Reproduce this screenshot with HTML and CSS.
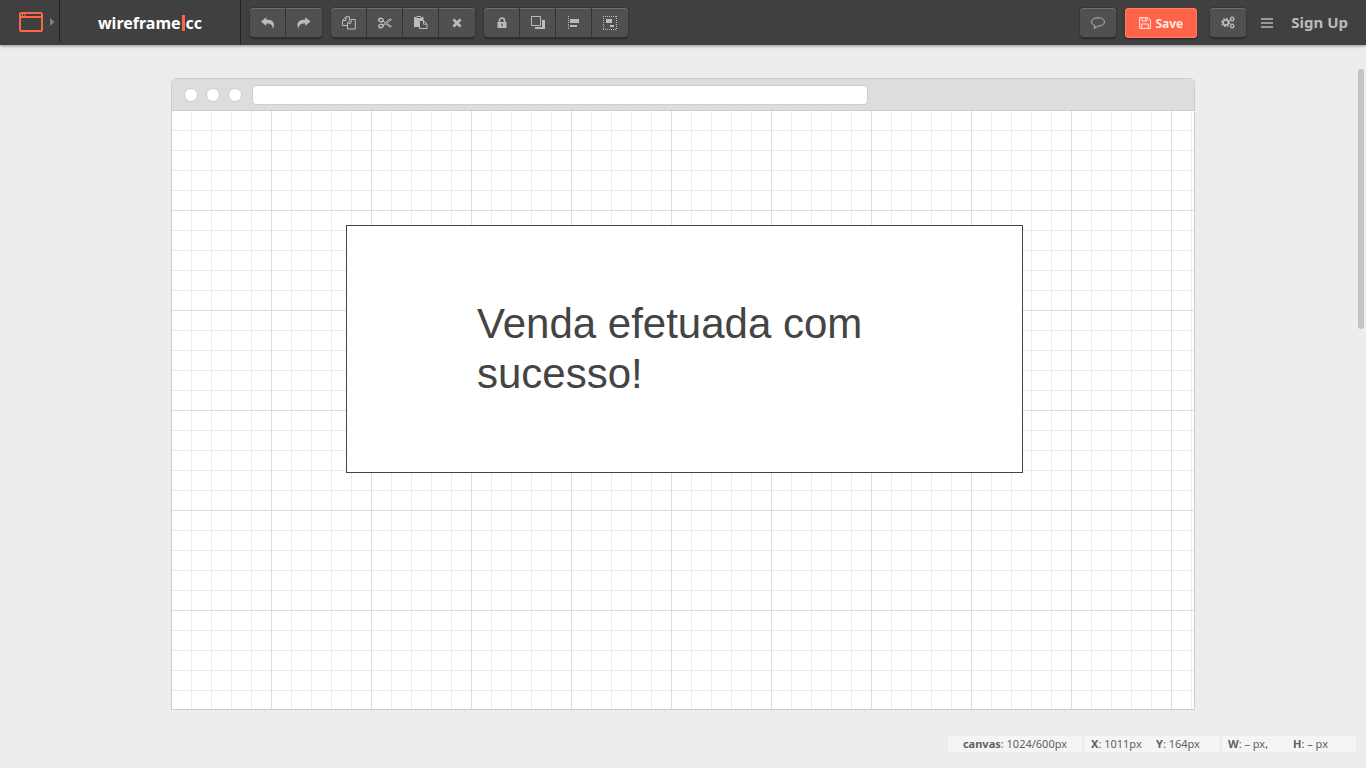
FILE: index.html
```html
<!DOCTYPE html>
<html lang="en">
<head>
<meta charset="utf-8">
<title>wireframe|cc</title>
<meta name="viewport" content="width=device-width, initial-scale=1">
<link rel="stylesheet" href="styles.css">
</head>
<body>
<header class="topbar">
  <button class="device" type="button" aria-label="Choose device">
    <svg width="24" height="20" viewBox="0 0 24 20" fill="none" stroke="#ff6448" stroke-width="2"><rect x="1" y="1" width="22" height="18" rx="1.5"/><path d="M1 5H23" stroke-width="2"/><path d="M3.500 2v2M6 2v2" stroke-width="1"/></svg>
    <svg width="5" height="8" viewBox="0 0 5 8" fill="#808080"><path d="M0 0L4.500 4L0 8Z"/></svg>
  </button>
  <a class="logo" href="#">wireframe<span class="logo-bar"></span>cc</a>
  <nav class="tools" aria-label="Editing">
    <div class="group">
      <button class="tool" type="button" aria-label="Undo"><svg width="14" height="12" viewBox="0 0 14 12"><path d="M0 4.600L5.300 .3V2.700C10.500 2.600 13.300 4.600 13 8.200Q12.900 10 11.700 11.800C11.700 8 9.800 6.300 5.300 6.500V9Z"/></svg></button>
      <button class="tool" type="button" aria-label="Redo"><svg width="14" height="12" viewBox="0 0 14 12"><path d="M13.500 4.600L8.200 .3V2.700C3 2.600 .2 4.600 .5 8.200Q.6 10 1.800 11.800C1.800 8 3.700 6.300 8.200 6.500V9Z"/></svg></button>
    </div>
    <div class="group">
      <button class="tool" type="button" aria-label="Copy"><svg class="line" width="14" height="14" viewBox="0 0 14 14"><path d="M5.500 9.500H.5V4.500L4 .7H7.500V4M.7 4.500H4V.7M5.500 7L9 3.500H13.300V13H5.500ZM5.700 7.200H9V3.700"/></svg></button>
      <button class="tool" type="button" aria-label="Cut"><svg class="line" width="14" height="12" viewBox="0 0 14 12"><ellipse cx="3" cy="3" rx="2.200" ry="1.700" transform="rotate(20 3 3)" stroke-width="1.500"/><ellipse cx="3" cy="9" rx="2.200" ry="1.700" transform="rotate(-20 3 9)" stroke-width="1.500"/><path d="M4.800 4.100L7.500 5.500L12 2L13.400 2.600L8.500 6.200L13.400 9.500L12 10L7.500 6.900L4.800 8M7.500 5.500L6.500 6.200L7.500 6.900"/></svg></button>
      <button class="tool" type="button" aria-label="Paste"><svg width="14" height="14" viewBox="0 0 14 14"><path d="M0 1H2.500V0H7V1H9.500V4H5V11H0Z"/><path d="M2.500 1.500H7" stroke="#505050" stroke-width="1"/><path class="line" d="M5.500 4.500H9.500L13 8V12.500H5.500ZM9.500 4.500V8.200H13"/></svg></button>
      <button class="tool" type="button" aria-label="Delete"><svg width="10" height="10" viewBox="0 0 10 10"><path d="M.5 2.300L2.300 .5L5 3.100L7.700 .5L9.500 2.300L6.900 5L9.500 7.700L7.700 9.500L5 6.900L2.300 9.500L.5 7.700L3.100 5Z"/></svg></button>
    </div>
    <div class="group">
      <button class="tool" type="button" aria-label="Lock"><svg width="10" height="12" viewBox="0 0 10 12"><path d="M2.500 6V3.500A2.500 2.500 0 0 1 7.500 3.500V6" fill="none" stroke="#bbb" stroke-width="1.500"/><rect x=".5" y="5" width="9" height="6" rx=".6"/><path d="M5 6.500v3" stroke="#505050" stroke-width="1.200"/></svg></button>
      <button class="tool" type="button" aria-label="Arrange"><svg width="14" height="14" viewBox="0 0 14 14"><path class="line" d="M.5 .5H9.500V9.500H.5Z"/><path d="M11 4H14V13H4V11H11Z"/></svg></button>
      <button class="tool" type="button" aria-label="Align"><svg width="12" height="14" viewBox="0 0 12 14"><path d="M.5 0V14" stroke="#bbb" stroke-dasharray="1 1"/><path d="M2 3H11V7H2ZM2 9H9V11H2Z"/></svg></button>
      <button class="tool" type="button" aria-label="Group"><svg width="14" height="14" viewBox="0 0 14 14"><path d="M0 .5H14M0 13.500H14M.5 0V14M13.500 0V14" stroke="#bbb" stroke-dasharray="1 1"/><path d="M3 3H9V7H3ZM7 9H11V11H7Z"/></svg></button>
    </div>
  </nav>
  <div class="actions">
    <div class="group"><button class="tool" type="button" aria-label="Comment"><svg class="line" width="14" height="12" viewBox="0 0 14 12"><path d="M4 8.600C1.800 8 .6 6.700 .6 5C.6 2.600 3.300 .8 7 .8S13.400 2.600 13.400 5S10.600 9.100 6.800 9.100Q5.200 10.800 3 11.200Q4 10 4 8.600Z"/></svg></button></div>
    <button class="save" type="button"><svg width="12" height="12" viewBox="0 0 12 12" fill="none" stroke="#ffe8e3" stroke-width="1"><path d="M.6 .6H9L11.400 3V11.400H.6ZM3 .6V4H8V.6M2.700 11.400V7H9.300V11.400M6.500 1.200V3.300"/></svg>Save</button>
    <div class="group"><button class="tool" type="button" aria-label="Settings"><svg class="line" width="14" height="13" viewBox="0 0 14 13"><circle cx="4.700" cy="6.500" r="2.700" stroke-width="1.800"/><circle cx="4.700" cy="6.500" r="4.100" stroke-width="1.200" stroke-dasharray="1.600 1.620"/><circle cx="11.200" cy="3" r="1.600" stroke-width="1.200"/><circle cx="11.200" cy="10" r="1.600" stroke-width="1.200"/><circle cx="11.200" cy="3" r="2.400" stroke-width=".7" stroke-dasharray="1 .9"/><circle cx="11.200" cy="10" r="2.400" stroke-width=".7" stroke-dasharray="1 .9"/></svg></button></div>
    <button class="menu" type="button" aria-label="Menu"><svg width="12" height="10" viewBox="0 0 12 10"><path d="M0 0H12V2H0ZM0 4H12V6H0ZM0 8H12V10H0Z"/></svg></button>
    <a class="signup" href="#">Sign Up</a>
  </div>
</header>
<main class="workspace">
  <section class="browser" aria-label="Wireframe">
    <div class="chrome">
      <span class="dot"></span><span class="dot"></span><span class="dot"></span>
      <input class="address" type="text" aria-label="Address">
    </div>
    <div class="canvas">
      <div class="shape"><p class="message">Venda efetuada com sucesso!</p></div>
    </div>
  </section>
</main>
<footer class="status">
  <div class="chip center"><span><b>canvas</b>: 1024/600px</span></div>
  <div class="chip"><span class="coord"><b>X</b>: 1011px</span><span><b>Y</b>: 164px</span></div>
  <div class="chip"><span class="coord"><b>W</b>: – px,</span><span><b>H</b>: – px</span></div>
</footer>
<div class="scroll-thumb"></div>
</body>
</html>
```
FILE: styles.css
```css
* { box-sizing: border-box; }
body {
  margin: 0;
  min-height: 100vh;
  display: flex;
  flex-direction: column;
  background: #ededed;
  color: #444;
  font-family: "Noto Sans", "Open Sans", sans-serif;
}
button { font: inherit; border: 0; padding: 0; background: none; cursor: pointer; }
a { text-decoration: none; }
svg { display: block; }

.topbar {
  display: flex;
  height: 45px;
  background: #404040;
  box-shadow: 0 1px 3px rgba(0, 0, 0, .4);
}
.device {
  display: flex;
  align-items: center;
  gap: 7px;
  width: 60px;
  height: 42px;
  padding: 1px 0 0 19px;
  border-right: 1px solid #222;
}
.logo {
  display: flex;
  align-items: center;
  justify-content: center;
  width: 181px;
  border-right: 1px solid #222;
  color: #fff;
  font-size: 16px;
  font-weight: 700;
}
.logo-bar { width: 3px; height: 16px; margin: 0 1px; background: #ff6448; }
.tools { display: flex; align-items: flex-start; gap: 9px; padding: 8px 9px; }
.group {
  display: flex;
  height: 29px;
  border-radius: 4px;
  background: #505050;
  box-shadow: inset 0 1px #707070, 0 0 0 1px #353535, 0 2px 1px #262626;
}
.tool {
  display: flex;
  align-items: center;
  justify-content: center;
  width: 36px;
  fill: #bbb;
}
.tool:not(:last-child) { border-right: 1px solid #333; }
.line { fill: none; stroke: #bbb; stroke-width: 1; }
.actions { display: flex; align-items: flex-start; margin-left: auto; padding: 8px 18px 8px 0; }
.save {
  display: flex;
  align-items: center;
  justify-content: center;
  gap: 4px;
  width: 72px;
  height: 30px;
  margin: 0 13px 0 9px;
  border-radius: 4px;
  background: #ff6448;
  box-shadow: inset 0 0 0 1px #ff7d66, 0 1px 2px #222;
  color: #ffe8e3;
  font-size: 12px;
  font-weight: 700;
}
.menu { width: 12px; height: 29px; margin: 0 18px 0 15px; fill: #999; }
.signup { color: #bbb; font-size: 15px; font-weight: 700; line-height: 28px; }

.workspace { flex: 1; padding: 33px 16px 24px; }
.browser {
  max-width: 1024px;
  margin: 0 auto;
  border: 1px solid #ccc;
  border-radius: 5px 5px 0 0;
  background: #fff;
  overflow: hidden;
}
.chrome {
  display: flex;
  align-items: center;
  gap: 8px;
  height: 32px;
  padding-left: 12px;
  border-bottom: 1px solid #ccc;
  background: #ddd;
}
.dot { width: 14px; height: 14px; border: 1px solid #ccc; border-radius: 50%; background: #fff; }
.address {
  width: 61%;
  height: 20px;
  margin-left: 2px;
  border: 1px solid #ccc;
  border-radius: 4px;
  background: #fff;
}
.canvas {
  position: relative;
  height: 598px;
  background-image:
    linear-gradient(to right, transparent 99px, #ddd 99px),
    linear-gradient(to bottom, transparent 99px, #ddd 99px),
    linear-gradient(to right, transparent 19px, #ebebeb 19px),
    linear-gradient(to bottom, transparent 19px, #ebebeb 19px);
  background-size: 100px 100px, 100px 100px, 20px 20px, 20px 20px;
}
.shape {
  position: absolute;
  left: 174px;
  top: 114px;
  width: 677px;
  height: 248px;
  padding: 73px 130px;
  border: 1px solid #444;
  background: #fff;
}
.message {
  margin: 0;
  font-family: "Liberation Sans", Arial, sans-serif;
  font-size: 42px;
  line-height: 50px;
}

.status { display: flex; justify-content: flex-end; gap: 3px; padding: 0 10px 16px; }
.chip {
  display: flex;
  width: 134px;
  height: 16px;
  padding-left: 6px;
  background: #f5f5f5;
  color: #606060;
  font-size: 11px;
  line-height: 16px;
  white-space: pre;
}
.center { justify-content: center; padding: 0; }
.coord { width: 65px; }
.scroll-thumb {
  position: fixed;
  top: 69px;
  right: 2px;
  width: 6px;
  height: 260px;
  border-radius: 3px;
  background: #c4c4c4;
}
```
